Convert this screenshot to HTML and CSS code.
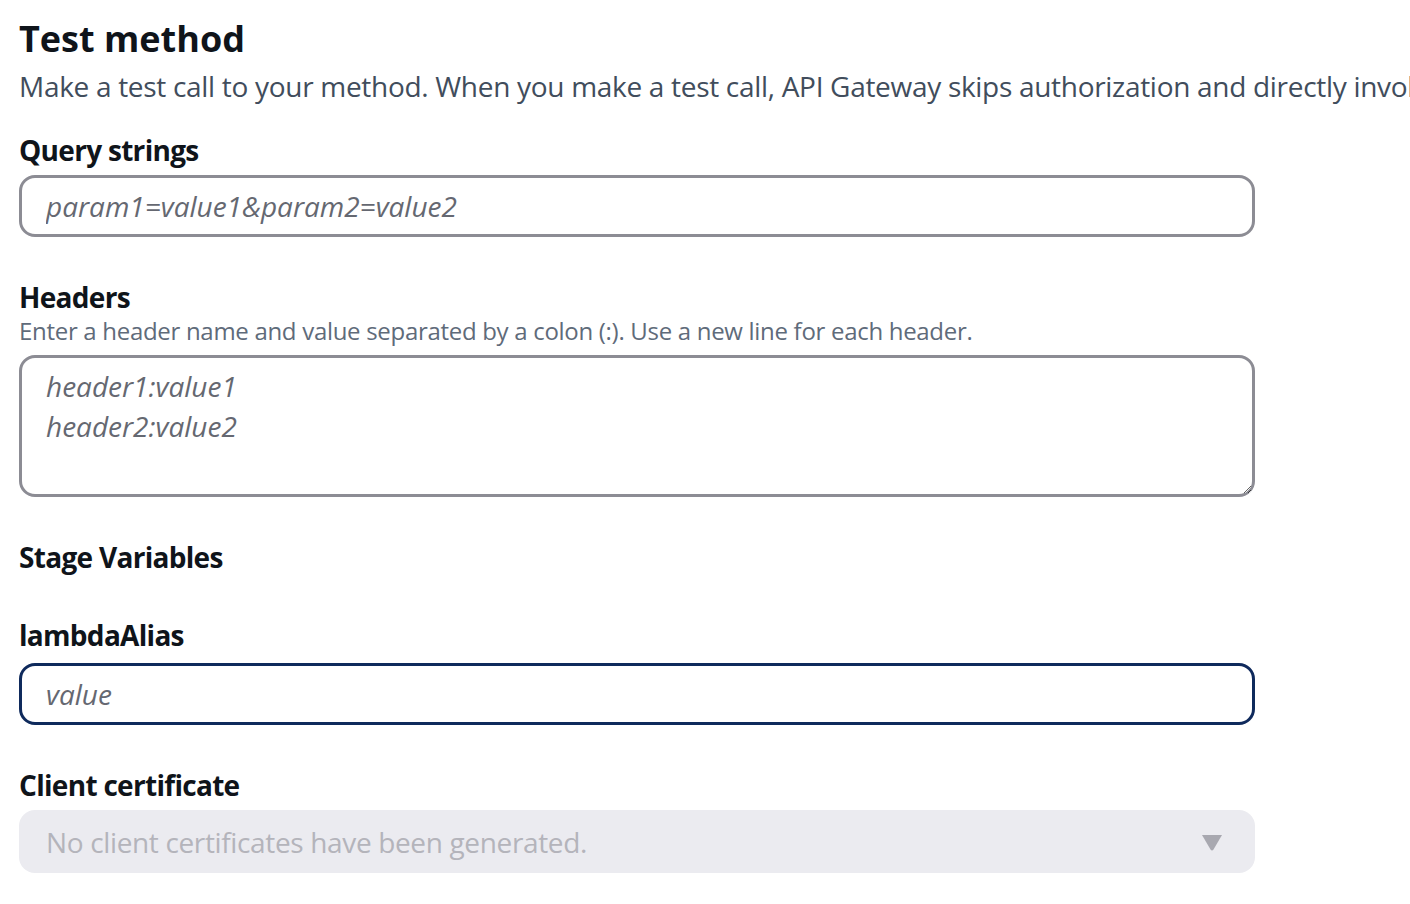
FILE: index.html
```html
<!DOCTYPE html>
<html lang="en">
<head>
<meta charset="utf-8">
<title>Test method</title>
<link rel="stylesheet" href="styles.css">
</head>
<body>
<main class="page">
  <h1 class="title">Test method</h1>
  <p class="intro">Make a test call to your method. When you make a test call, API Gateway skips authorization and directly invokes your method.</p>

  <label class="label label-first" for="qs">Query strings</label>
  <input class="field" id="qs" type="text" placeholder="param1=value1&amp;param2=value2">

  <label class="label label-gap" for="hd">Headers</label>
  <p class="hint">Enter a header name and value separated by a colon (:). Use a new line for each header.</p>
  <textarea class="area" id="hd" placeholder="header1:value1&#10;header2:value2"></textarea>

  <h2 class="label label-gap">Stage Variables</h2>

  <label class="label label-gap" for="la">lambdaAlias</label>
  <input class="field field-focus" id="la" type="text" placeholder="value">

  <label class="label label-gap">Client certificate</label>
  <div class="select">
    <span class="select-text">No client certificates have been generated.</span>
    <svg class="caret" width="22" height="17" viewBox="0 0 22 17"><path d="M1 1 H21 L12.5 15.5 Q11 17.5 9.5 15.5 Z" fill="#a8a8b0"/></svg>
  </div>
</main>
</body>
</html>
```

FILE: styles.css
```css
* { box-sizing: border-box; }
html, body { margin: 0; padding: 0; background: #ffffff; }
body {
  font-family: "Open Sans", "Noto Sans", Arial, sans-serif;
  color: #0f141a;
  overflow: hidden;
}
.page {
  display: flex;
  flex-direction: column;
  align-items: flex-start;
  padding: 17px 0 0 19px;
  width: 1410px;
  overflow: hidden;
}
.title {
  margin: 0;
  font-size: 36px;
  line-height: 44px;
  font-weight: 700;
  color: #0f141a;
}
.intro {
  margin: 7px 0 0;
  font-size: 28px;
  line-height: 36px;
  color: #414d5c;
  white-space: nowrap;
  letter-spacing: -0.3px;
}
.label {
  display: block;
  margin: 0;
  font-size: 28px;
  line-height: 36px;
  font-weight: 700;
  color: #0f141a;
  letter-spacing: -0.7px;
}
.label-first { margin-top: 28px; }
.label-gap { margin-top: 42px; }
.hint {
  margin: 0;
  font-size: 24px;
  line-height: 32px;
  color: #5f6b7a;
  letter-spacing: -0.3px;
}
.field {
  display: block;
  width: 1236px;
  height: 62px;
  margin-top: 7px;
  padding: 0 24px;
  border: 3px solid #8c8c94;
  border-radius: 16px;
  font-family: inherit;
  font-size: 28px;
  color: #0f141a;
  background: #fff;
  outline: none;
}
.field::placeholder, .area::placeholder {
  color: #656871;
  font-style: italic;
  opacity: 1;
}
.field-focus {
  border-color: #0f2a5c;
  margin-top: 10px;
}
.area {
  display: block;
  width: 1236px;
  height: 142px;
  margin-top: 8px;
  padding: 8px 24px;
  border: 3px solid #8c8c94;
  border-radius: 16px;
  font-family: inherit;
  font-size: 28px;
  line-height: 40px;
  background: #fff;
  outline: none;
}
.select {
  display: flex;
  align-items: center;
  justify-content: space-between;
  width: 1236px;
  height: 63px;
  margin-top: 7px;
  padding: 0 32px 0 27px;
  background: #ebebf0;
  border-radius: 16px;
}
.select-text {
  font-size: 28px;
  color: #b4b4bb;
  letter-spacing: -0.35px;
}
.caret { display: block; margin-top: 2px; }
```
